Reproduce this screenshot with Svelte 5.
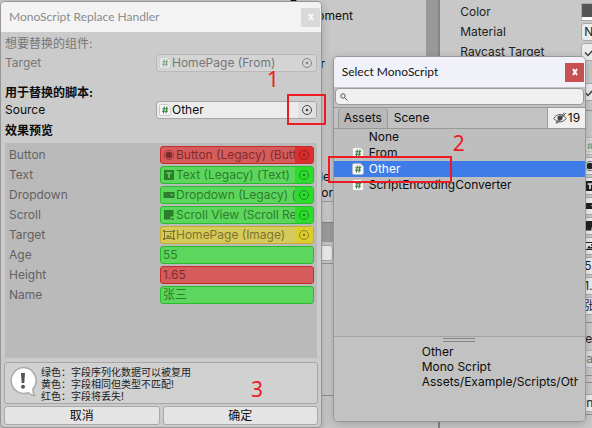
<script>
  const fields = [
    { id: 'f-button', label: 'Button', tone: 'red', icon: 'button', value: 'Button (Legacy) (Button)' },
    { id: 'f-text', label: 'Text', tone: 'green', icon: 'text', value: 'Text (Legacy) (Text)' },
    { id: 'f-dropdown', label: 'Dropdown', tone: 'green', icon: 'dropdown', value: 'Dropdown (Legacy) (Dropdown)' },
    { id: 'f-scroll', label: 'Scroll', tone: 'green', icon: 'scroll', value: 'Scroll View (Scroll Rect)' },
    { id: 'f-target', label: 'Target', tone: 'yellow', icon: 'image', value: 'HomePage (Image)' },
    { id: 'f-age', label: 'Age', tone: 'green', value: '55' },
    { id: 'f-height', label: 'Height', tone: 'red', value: '1.65' },
    { id: 'f-name', label: 'Name', tone: 'green', value: '张三' }
  ];
  const scripts = ['None', 'From', 'Other', 'ScriptEncodingConverter'];
  let selected = $state('Other');
</script>

{#snippet icon(name)}
  <svg class="icon" viewBox="0 0 12 12" aria-hidden="true">
    {#if name === 'script'}
      <path d="M2 .5h6.500l3 3v6.500a1.500 1.500 0 0 1-1.500 1.500h-8A1.500 1.500 0 0 1 .5 10V2A1.500 1.500 0 0 1 2 .5Z" fill="#f8f8f8" stroke="#b9b9b9" stroke-width=".7" />
      <path d="M5.400 2.500 4.400 9.500M8 2.500l-1 7M3.300 4.700h6M3 7.300h6" fill="none" stroke="#2e7d3a" stroke-width="1.100" />
    {:else if name === 'button'}
      <circle cx="6" cy="6" r="4.700" fill="none" stroke="currentColor" stroke-width="1" opacity=".6" />
      <circle cx="6" cy="6" r="3.300" fill="currentColor" />
    {:else if name === 'text'}
      <path fill-rule="evenodd" d="M1 1h10v10H1ZM3.500 3.300v1.500h1.700V9h1.600V4.800h1.700V3.300Z" fill="currentColor" />
    {:else if name === 'dropdown'}
      <path fill-rule="evenodd" d="M.5 3h11v6H.5ZM7 5l1.500 2L10 5Z" fill="currentColor" />
    {:else if name === 'scroll'}
      <path d="M1 1h9.500v6.500H7.500V10.500H1Z" fill="currentColor" />
      <path d="M8.500 9h2v2h-2Z" fill="currentColor" />
    {:else}
      <path d="M1.500 2.500h9v7h-9Z" fill="none" stroke="currentColor" />
      <path d="M0 1h2v2H0ZM10 1h2v2h-2ZM0 9h2v2H0ZM10 9h2v2h-2Z" fill="currentColor" />
      <path d="m3 8.500 2-3 1.500 2 1-1L9 8.500ZM7 4h1.500v1.500H7Z" fill="currentColor" />
    {/if}
  </svg>
{/snippet}

{#snippet target()}
  <svg class="dot" viewBox="0 0 12 12" aria-hidden="true">
    <circle cx="6" cy="6" r="4.500" fill="none" stroke="currentColor" />
    <circle cx="6" cy="6" r="1.300" fill="currentColor" />
  </svg>
{/snippet}

{#snippet check()}
  <svg class="icon" viewBox="0 0 12 12" aria-hidden="true"><path d="m1 6.500 3 3 7-7.500" fill="none" stroke="#444" stroke-width="1.500" /></svg>
{/snippet}

{#snippet cross()}
  <svg viewBox="0 0 8 8" aria-hidden="true"><path d="m2 1 4 6m0-6-4 6" /></svg>
{/snippet}

{#snippet objectField(id, name, value)}
  <div class="field">
    {@render icon(name)}
    <span class="value">{value}</span>
    <button class="pick" {id}>{@render target()}</button>
  </div>
{/snippet}

<div class="desktop">
  <div class="editor" aria-hidden="true">
    <div class="hierarchy">
      <p class="clip">Monobehav_Icon</p>
      <p class="component">Development</p>
      <p class="renderer">Renderer</p>
      <p class="mode">Mode</p>
      <p class="editor-name">Editor</p>
      <div class="gap"></div>
      <div class="strip"></div>
      <div class="slot"><span></span></div>
      <div class="pane"></div>
    </div>
    <div class="splitter"></div>
    <div class="inspector">
      <div class="prop"><span>Color</span><i class="swatch"></i></div>
      <div class="prop"><span>Material</span><i>N</i></div>
      <div class="prop"><span>Raycast Target</span><i>{@render check()}</i></div>
      <div class="prop"></div>
      <div class="prop"><span></span><i>{@render check()}</i></div>
      <div class="rule first"></div>
      <div class="prop faded"><span></span><i>{@render icon('script')}</i></div>
      <div class="prop"><span></span><i>{@render icon('button')}</i></div>
      <div class="prop"><span></span><i>{@render icon('text')}</i></div>
      <div class="prop"><span></span><i>{@render icon('dropdown')}</i></div>
      <div class="prop"><span></span><i>{@render icon('scroll')}</i></div>
      <div class="prop"><span></span><i>{@render icon('image')}</i></div>
      <div class="prop"><span></span><i>55</i></div>
      <div class="prop"><span></span><i>1.65</i></div>
      <div class="prop"><span></span><i>张三</i></div>
      <div class="rule"></div>
      <div class="prop"><span></span><b>e</b></div>
      <div class="prop faded"><span></span><i class="tail">a</i></div>
      <div class="rule"></div>
      <div class="rule low"></div>
      <div class="prop"><span></span><i class="tail">n</i></div>
      <div class="rule end"></div>
    </div>
  </div>

  <section class="window handler" aria-label="MonoScript Replace Handler">
    <header><h1>MonoScript Replace Handler</h1><button class="close" aria-label="关闭">{@render cross()}</button></header>
    <div class="body">
      <div class="disabled">
        <h2 class="plain">想要替换的组件:</h2>
        <div class="row"><label for="from">Target</label>{@render objectField('from', 'script', 'HomePage (From)')}</div>
      </div>
      <h2 class="second">用于替换的脚本:</h2>
      <div class="row source">
        <label for="source">Source</label>{@render objectField('source', 'script', 'Other')}
        <span class="mark box-one"></span><span class="digit one">1</span>
      </div>
      <h2 class="third">效果预览</h2>
      <div class="preview">
        {#each fields as f}
          <div class="row {f.tone}">
            <label for={f.id}>{f.label}</label>
            {#if f.icon}{@render objectField(f.id, f.icon, f.value)}{:else}<input class="field" id={f.id} value={f.value} readonly />{/if}
          </div>
        {/each}
      </div>
      <div class="help">
        <svg viewBox="0 0 30 32" aria-hidden="true">
          <path d="M15 1.500a13 13 0 1 0 5.500 25.200c2 2 3.500 2.800 6 2.800-1.200-1.800-1.600-3.500-1.600-6.500A13 13 0 0 0 15 1.500Z" fill="#fff" stroke="#aaa" stroke-width="1.500" />
          <path d="M13 7h4l-.7 10h-2.600Z" fill="#555" /><circle cx="15" cy="20.800" r="2" fill="#555" />
        </svg>
        <p>绿色：字段序列化数据可以被复用<br />黄色：字段相同但类型不匹配!<br />红色：字段将丢失!</p>
        <span class="digit three">3</span>
      </div>
      <div class="actions"><button>取消</button><button>确定</button></div>
    </div>
  </section>

  <section class="window picker" aria-label="Select MonoScript">
    <header><h1>Select MonoScript</h1><button class="close" aria-label="关闭">{@render cross()}</button></header>
    <div class="search">
      <svg viewBox="0 0 8 8" aria-hidden="true"><circle cx="3" cy="3" r="2.200" /><path d="m4.700 4.700 2.800 2.800" /></svg>
      <input type="search" aria-label="Search" />
    </div>
    <div class="tabs">
      <button class="active">Assets</button><button>Scene</button>
      <button class="hidden-count">
        <svg viewBox="0 0 16 14" aria-hidden="true"><path d="M1 7.500C3 4 6 3 8 3s5 1 7 4.500C13 10.500 10 11.500 8 11.500S3 10.500 1 7.500Z" /><circle cx="8" cy="7" r="2.500" fill="#444" /><path d="m3 13 10-12M4.500 13.500l10-12" /></svg>19
      </button>
    </div>
    <ul>
      {#each scripts as s}
        <li><button class:chosen={selected === s} onclick={() => (selected = s)}>
          <span class="thumb">{#if s !== 'None'}{@render icon('script')}{/if}</span>{s}
        </button></li>
      {/each}
      <li class="mark box-two"></li>
      <li class="digit two">2</li>
    </ul>
    <footer><div class="grip"></div><p>Other<br />Mono Script<br />Assets/Example/Scripts/Other.cs</p></footer>
  </section>
</div>

<style>
  :global(body) { margin: 0; }
  .desktop, .desktop * { box-sizing: border-box; }
  .desktop {
    position: relative; height: 100vh; min-height: 428px; overflow: hidden;
    background: #c8c8c8; color: #0c0c0c;
    font: 12px/16px Inter, "Noto Sans CJK SC", sans-serif;
  }
  h1, h2, p, ul { margin: 0; padding: 0; }
  button, input { font: inherit; color: inherit; margin: 0; padding: 0; border: 0; background: none; }
  .icon, .dot { width: 12px; height: 12px; flex: none; display: block; }

  /* editor behind the windows */
  .editor { display: flex; height: 100%; }
  .hierarchy { flex: 0 0 72%; display: flex; flex-direction: column; overflow: hidden; background: #c8c8c8; }
  .hierarchy p { width: 353px; text-align: right; }
  .hierarchy .clip { margin-top: -12px; padding-right: 32px; }
  .hierarchy .component { margin-top: 4px; }
  .hierarchy .renderer { margin-top: 32px; padding-right: 28px; }
  .hierarchy .mode { margin-top: 97px; padding-right: 23px; }
  .hierarchy .editor-name { padding-right: 20px; }
  .gap { height: 21px; border-top: 1px solid #a0a0a0; background: #cbcbcb; }
  .strip { height: 20px; background: #9e9e9e; border-top: 1px solid #858585; }
  .slot { height: 22px; padding: 3px 0; border-bottom: 1px solid #939393; }
  .slot span { display: block; width: 333px; height: 16px; background: #efefef; border: 1px solid #aaa; border-radius: 3px; }
  .pane { height: 132px; border-bottom: 1px solid #8f8f8f; }
  .splitter { flex: 0 0 14px; background: linear-gradient(#999 66%, #c8c8c8 66%); border-right: 2px solid #858585; }
  .inspector { flex: 1; min-width: 0; padding-top: 2px; overflow: hidden; }
  .prop { display: flex; height: 20px; padding: 1px 0 1px 20px; line-height: 18px; color: #222; }
  .prop span { flex: 0 0 121px; white-space: nowrap; }
  .prop i { flex: 0 0 60px; display: flex; align-items: center; height: 18px; padding: 0 2px; font-style: normal; white-space: nowrap; background: #ececec; border: 1px solid #aaa; border-radius: 3px; }
  .prop i.swatch { background: linear-gradient(#555 80%, #fff 80%); border-radius: 0; }
  .prop i.tail, .prop b { padding-left: 4px; font-weight: 400; }
  .faded { opacity: .5; }
  .rule { height: 1px; margin: 6px 0; background: #8f8f8f; }
  .rule.first { margin: 8px 0 25px; }
  .rule.low { margin-bottom: 10px; }
  .rule.end { margin: 1px 0 0 12px; }

  /* floating windows */
  .window { position: absolute; display: flex; flex-direction: column; border: 1px solid #979797; border-radius: 5px; box-shadow: 0 2px 8px #0003; }
  .handler { z-index: 1; left: 0; top: 1px; bottom: 0; width: 54.4%; background: #cbcbcb; }
  .picker { z-index: 2; right: 1%; top: 56px; bottom: 6px; width: 42.8%; background: #c2c2c2; }
  header { display: flex; align-items: center; justify-content: space-between; height: 30px; padding: 0 1px 0 8px; background: #f3f3f3; border-radius: 4px 4px 0 0; }
  h1 { font: 400 12px/18px Lato, sans-serif; color: #8c8c8c; white-space: nowrap; }
  .close { width: 19px; height: 19px; flex: none; display: grid; place-items: center; background: #d9d9d9; }
  .close svg { width: 8px; height: 8px; fill: none; stroke: #f6f6f6; stroke-width: 2; }
  .picker header { background: #f1f2f9; }
  .picker h1 { color: #151515; }
  .picker .close { background: #c75050; }
  .picker .close svg { stroke: #fff; }

  .body { flex: 1; min-height: 0; display: flex; flex-direction: column; padding: 4px 3px 2px; }
  h2 { font-size: 12px; line-height: 16px; font-weight: 700; padding-left: 1px; }
  .plain { font-weight: 400; margin-bottom: 2px; }
  .second { margin-top: 13px; }
  .third { margin: 4px 0; }
  .row { position: relative; display: flex; height: 18px; line-height: 18px; padding: 0 1px; }
  .row label { flex: 0 0 151px; }
  .field { flex: 1; min-width: 0; height: 18px; display: flex; align-items: center; padding-left: 2px; border: 1px solid #a6a6a6; border-radius: 3px; background: #ececec; overflow: hidden; }
  .value { flex: 1; min-width: 0; padding-left: 1px; white-space: nowrap; overflow: hidden; }
  .pick { width: 18px; height: 18px; flex: none; display: grid; place-items: center; background: #e0e0e0; color: #444; }
  .disabled { color: #767676; }
  .disabled .field { background: #d4d4d4; border-color: #b9b9b9; }
  .disabled .icon { opacity: .5; }
  .disabled .pick { background: none; color: #858585; }
  .preview { flex: 1; display: flex; flex-direction: column; gap: 2px; margin: 0 1px; padding: 3px; background: #bababa; color: #626262; }
  .preview .row { padding: 0 0 0 1px; }
  .red .field { background: #d65c5c; border-color: #c42b2b; color: #7e2c2c; }
  .red .pick { background: #dc2e2e; color: #8f1d1d; }
  .green .field { background: #5cd65c; border-color: #2cbb2c; color: #2c7e2c; }
  .green .pick { background: #2edc2e; color: #1d8f1d; }
  .yellow .field { background: #d6ca5c; border-color: #c4ad2b; color: #7e742c; }
  .yellow .pick { background: #dccc2e; color: #8f821d; }

  .help { position: relative; display: flex; height: 42px; margin-top: 4px; padding: 2px 3px; background: #d1d1d1; border: 1px solid #a6a6a6; border-radius: 3px; }
  .help svg { width: 30px; height: 34px; flex: none; }
  .help p { padding: 1px 0 0 3px; font-size: 10px; line-height: 12px; white-space: nowrap; color: #222; }
  .actions { display: flex; gap: 3px; margin-top: 2px; }
  .actions button { flex: 1; height: 19px; background: #e4e4e4; border: 1px solid #a9a9a9; border-radius: 3px; line-height: 17px; }

  .search { display: flex; align-items: center; height: 17px; margin: 1px 1px 2px; padding: 0 4px; background: #f0f0f0; border: 1px solid #999; border-radius: 4px; }
  .search svg { width: 8px; height: 8px; fill: none; stroke: #555; }
  .search input { flex: 1; min-width: 0; height: 14px; outline: 0; }
  .tabs { display: flex; height: 22px; padding-left: 4px; border: solid #999; border-width: 1px 0; background: #c2c2c2; }
  .tabs button { padding: 0 6px; }
  .tabs .active { padding: 0 5px; background: #b8b8b8; border: solid #999; border-width: 0 1px; border-radius: 4px 4px 0 0; }
  .tabs .hidden-count { display: flex; align-items: center; gap: 1px; margin-left: auto; padding: 0 5px; background: #efefef; border-left: 1px solid #999; }
  .hidden-count svg { width: 14px; height: 14px; fill: none; stroke: #444; }
  ul { position: relative; flex: 1; list-style: none; background: #bebebe; }
  ul button { display: flex; align-items: center; width: 100%; height: 16px; padding-left: 18px; text-align: left; }
  .thumb { width: 17px; flex: none; }
  .chosen { background: #3e7de7; color: #fff; }
  footer { height: 85px; border-top: 1px solid #a3a3a3; overflow: hidden; background: #c2c2c2; border-radius: 0 0 4px 4px; }
  .grip { width: 32px; height: 4px; margin: 1px auto 0; border: solid #858585; border-width: 1px 0; }
  footer p { margin: 2px 7px 0 88px; line-height: 15px; white-space: nowrap; overflow: hidden; }

  /* step marks */
  .mark { position: absolute; z-index: 2; border: 2px solid #ed1c24; pointer-events: none; }
  .box-one { top: -7px; right: -8px; width: 39px; height: 31px; }
  .box-two { top: 27px; left: -6px; width: 124px; height: 27px; }
  .digit { position: absolute; z-index: 2; font: 21px/20px "Noto Sans", sans-serif; color: #ed1c24; }
  .one { top: -32px; right: 39px; }
  .two { top: 4px; left: 119px; }
  .three { top: 16px; right: 54px; }
</style>
